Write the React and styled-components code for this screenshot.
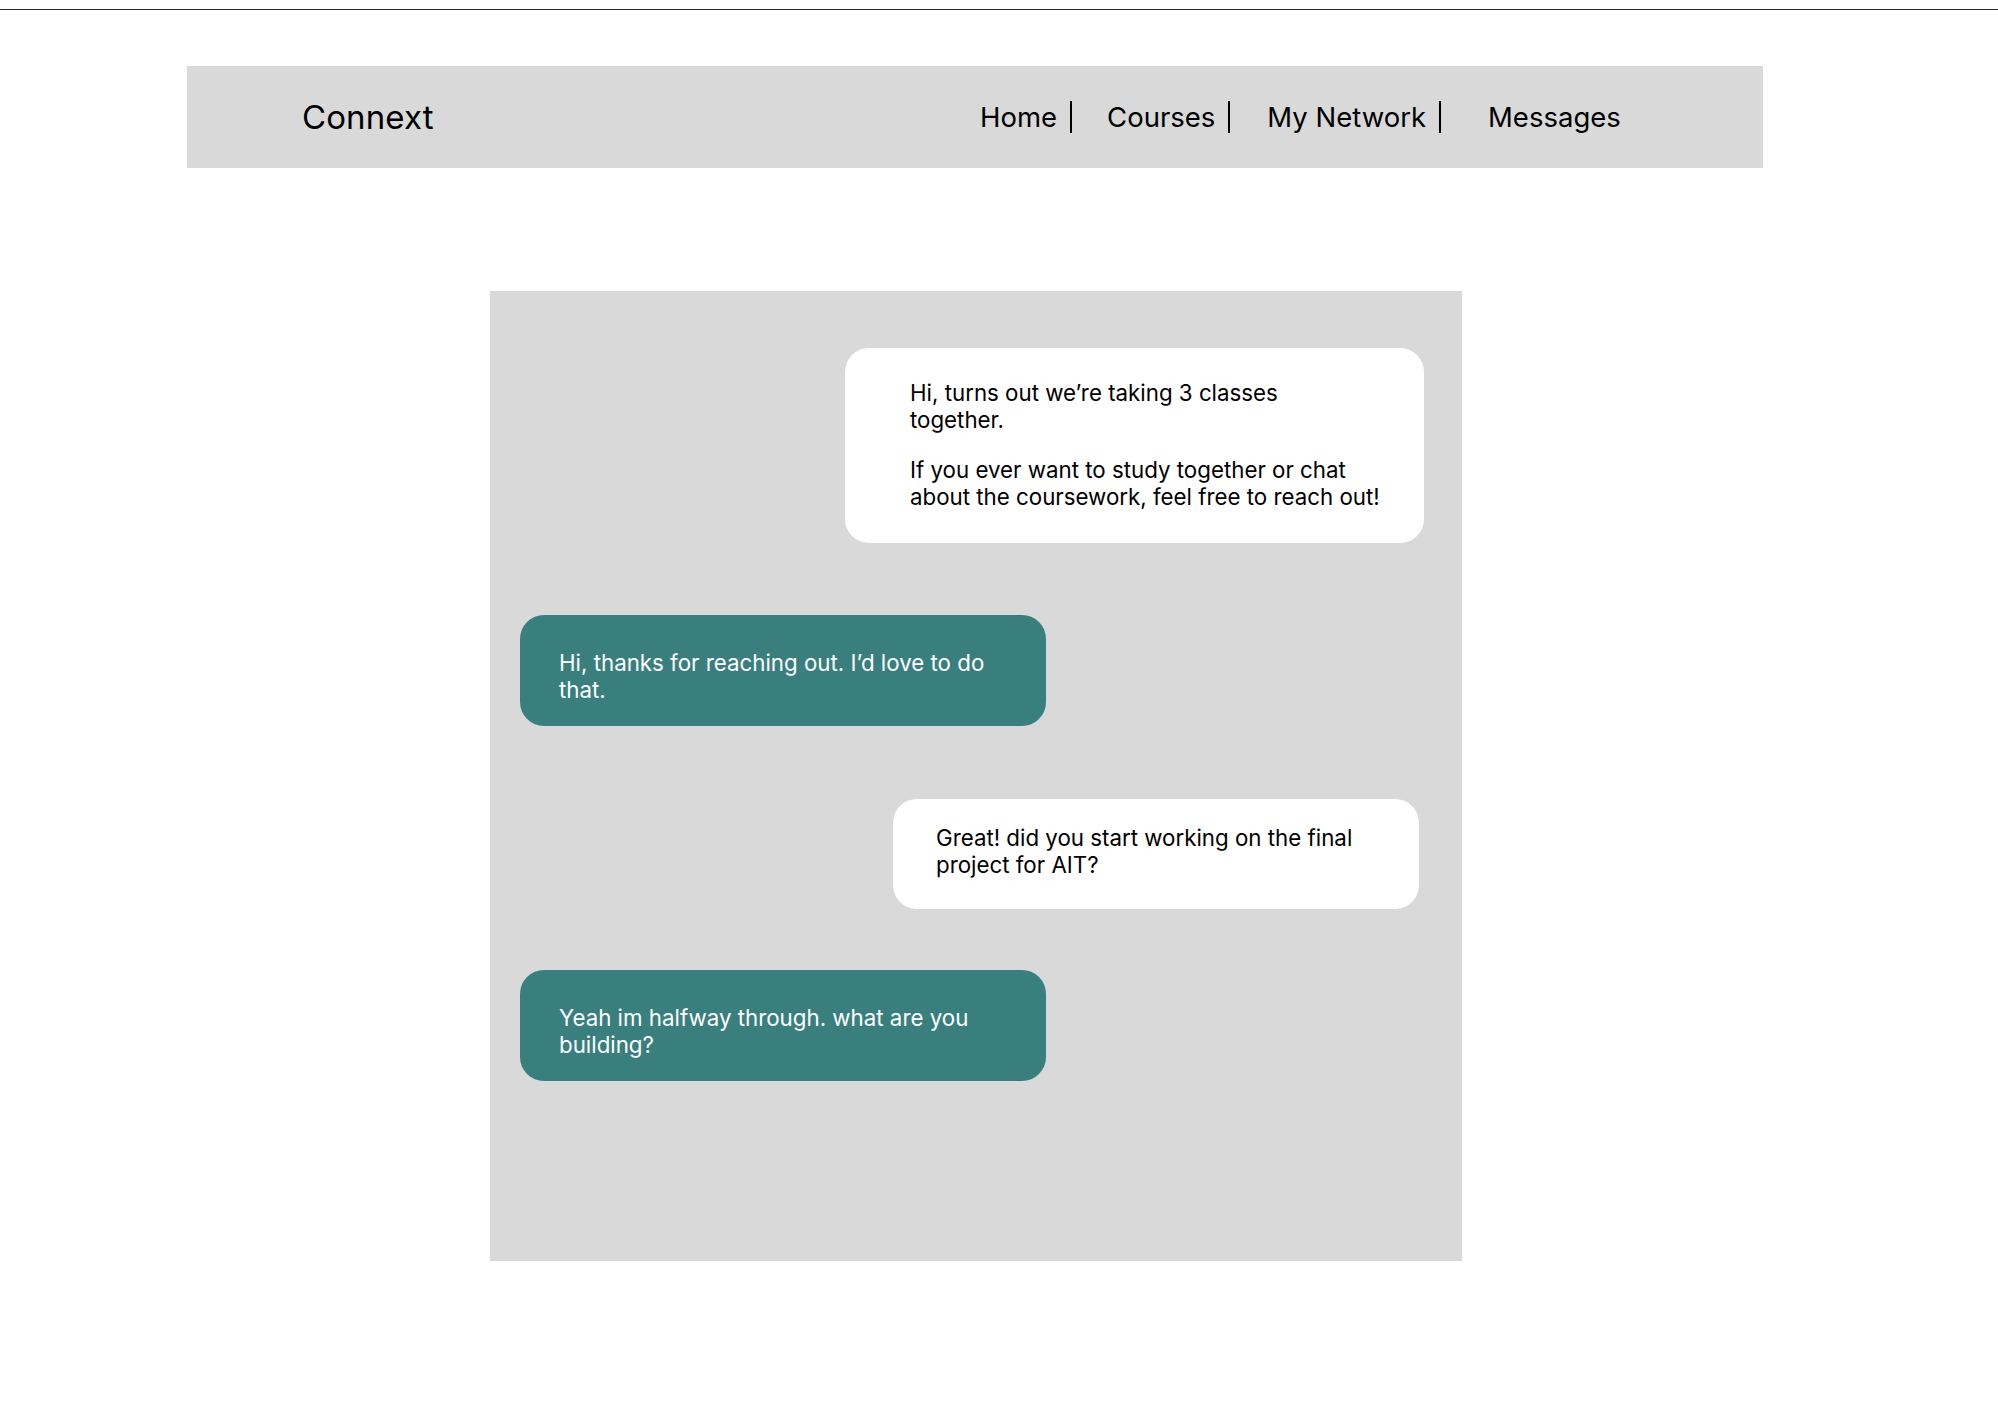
import React from "react"
import styled, { createGlobalStyle } from "styled-components"

const GlobalStyle = createGlobalStyle`
	body {
		margin: 0;
		background: #ffffff;
		font-family: Inter, "Noto Sans", sans-serif;
		color: #000000;
	}
`

const navItems = [
	{ label: "Home", divider: true, space: 35 },
	{ label: "Courses", divider: true, space: 37 },
	{ label: "My Network", divider: true, space: 47 },
	{ label: "Messages", divider: false, space: 0 },
]

const messages = [
	{
		id: 1,
		mine: false,
		width: 579,
		pad: "31px 30px 33px 65px",
		right: 0,
		top: 0,
		lines: [
			["Hi, turns out we\u2019re taking 3 classes", "together."],
			["If you ever want to study together or chat", "about the coursework, feel free to reach out!"],
		],
	},
	{
		id: 2,
		mine: true,
		width: 526,
		pad: "34px 30px 23px 39px",
		right: 0,
		top: 72,
		lines: [["Hi, thanks for reaching out. I\u2019d love to do", "that."]],
	},
	{
		id: 3,
		mine: false,
		width: 526,
		pad: "25px 30px 31px 43px",
		right: 5,
		top: 73,
		lines: [["Great! did you start working on the final", "project for AIT?"]],
	},
	{
		id: 4,
		mine: true,
		width: 526,
		pad: "34px 30px 23px 39px",
		right: 0,
		top: 61,
		lines: [["Yeah im halfway through. what are you", "building?"]],
	},
]

function App() {
	return (
		<Page>
			<GlobalStyle />
			<TopRule />
			<Content>
				<Header>
					<Brand>Connext</Brand>
					<Nav>
						{navItems.map((item) => (
							<NavItem key={item.label} $divider={item.divider} $space={item.space}>
								{item.label}
							</NavItem>
						))}
					</Nav>
				</Header>

				<ChatPanel>
					{messages.map((msg) => (
						<Bubble
							key={msg.id}
							$mine={msg.mine}
							$width={msg.width}
							$pad={msg.pad}
							$right={msg.right}
							$top={msg.top}
						>
							{msg.lines.map((para, i) => (
								<Paragraph key={i}>
									{para.map((line, j) => (
										<React.Fragment key={j}>
											{line}
											{j < para.length - 1 && <br />}
										</React.Fragment>
									))}
								</Paragraph>
							))}
						</Bubble>
					))}
				</ChatPanel>
			</Content>
		</Page>
	)
}

export default App

const Page = styled.div`
	width: 1998px;
	min-height: 1408px;
	padding-top: 9px;
	box-sizing: border-box;
`

const TopRule = styled.div`
	height: 1px;
	width: 100%;
	background: #2a2a2a;
`

const Content = styled.div`
	display: flex;
	flex-direction: column;
	padding: 56px 0 0 187px;
`

const Header = styled.header`
	display: flex;
	align-items: center;
	width: 1576px;
	height: 102px;
	background: #d9d9d9;
	padding-left: 115px;
	box-sizing: border-box;
`

const Brand = styled.div`
	width: 678px;
	font-size: 33px;
	font-weight: 400;
	letter-spacing: 0.1px;
`

const Nav = styled.nav`
	display: flex;
	align-items: center;
	margin-top: -1px;
`

const NavItem = styled.span`
	font-size: 27.5px;
	line-height: 32px;
	padding-right: ${(p) => (p.$divider ? "13px" : "0")};
	border-right: ${(p) => (p.$divider ? "2px solid #000" : "none")};
	margin-right: ${(p) => p.$space}px;
`

const ChatPanel = styled.section`
	display: flex;
	flex-direction: column;
	width: 972px;
	height: 970px;
	margin: 123px 0 0 303px;
	padding: 57px 38px 0 30px;
	box-sizing: border-box;
	background: #d9d9d9;
`

const Bubble = styled.div`
	align-self: ${(p) => (p.$mine ? "flex-start" : "flex-end")};
	width: ${(p) => p.$width}px;
	margin-top: ${(p) => p.$top}px;
	margin-right: ${(p) => p.$right}px;
	padding: ${(p) => p.$pad};
	box-sizing: border-box;
	border-radius: 24px;
	background: ${(p) => (p.$mine ? "#387f7e" : "#ffffff")};
	color: ${(p) => (p.$mine ? "#ffffff" : "#000000")};
	font-size: 22.3px;
	line-height: 27px;
`

const Paragraph = styled.p`
	margin: 0;

	& + & {
		margin-top: 23px;
	}
`
